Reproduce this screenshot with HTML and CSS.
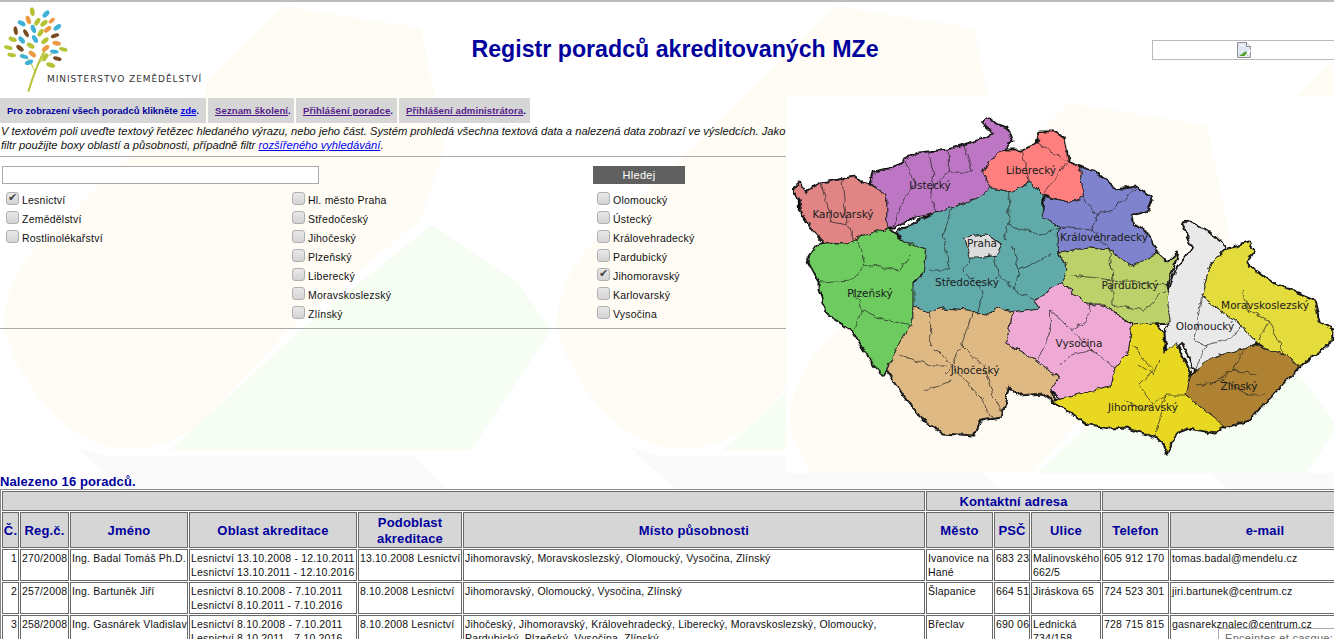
FILE: index.html
```html
<!DOCTYPE html>
<html lang="cs">
<head>
<meta charset="utf-8">
<title>Registr poradců akreditovaných MZe</title>
<link rel="stylesheet" href="styles.css">
</head>
<body>
<svg class="decor" viewBox="0 0 1334 639" aria-hidden="true">
  <defs>
    <g id="tileshapes">
      <path class="cream" d="M283 6 L421 28 L445 146 L420 220 L288 330 L202 422 Q165 450 127 449 Q70 447 30 385 Q4 345 4 320 Q6 285 33 250 Z"/>
      <path class="green" d="M432 225 L518 283 L551 330 L471 450 L170 450 L301 330 Z"/>
      <path class="greyish" d="M76 447 L109 456 L413 456 L446 488 L480 540 L150 540 L121 488 Z"/>
    </g>
    <pattern id="tile-page" width="553" height="700" patternUnits="userSpaceOnUse"><use href="#tileshapes"/></pattern>
    <pattern id="tile-map" width="553" height="700" patternUnits="userSpaceOnUse" patternTransform="translate(786 97)"><use href="#tileshapes"/></pattern>
  </defs>
  <rect width="1334" height="639" fill="url(#tile-page)"/>
</svg>
<header class="head">
  <div class="logo">
    <svg class="tree" viewBox="0 0 210 290" aria-hidden="true">
      <path d="M85 275 C100 225 115 185 135 150" fill="none" stroke="#b5c334" stroke-width="6"/>
      <path d="M112 195 C125 180 140 170 158 160 M104 215 C95 190 85 175 65 160" fill="none" stroke="#b5c334" stroke-width="3"/>
      <g class="lg"><ellipse cx="97" cy="35" rx="13" ry="7" transform="rotate(80 97 35)"/><ellipse cx="112" cy="65" rx="13" ry="7" transform="rotate(-60 112 65)"/><ellipse cx="132" cy="70" rx="13" ry="7" transform="rotate(-40 132 70)"/><ellipse cx="122" cy="98" rx="13" ry="7" transform="rotate(-60 122 98)"/><ellipse cx="38" cy="118" rx="13" ry="7" transform="rotate(20 38 118)"/><ellipse cx="135" cy="122" rx="13" ry="7" transform="rotate(-40 135 122)"/><ellipse cx="25" cy="143" rx="13" ry="6" transform="rotate(15 25 143)"/><ellipse cx="92" cy="137" rx="13" ry="7" transform="rotate(30 92 137)"/><ellipse cx="190" cy="148" rx="13" ry="6" transform="rotate(15 190 148)"/><ellipse cx="35" cy="165" rx="13" ry="6" transform="rotate(10 35 165)"/><ellipse cx="135" cy="172" rx="13" ry="7" transform="rotate(-60 135 172)"/><ellipse cx="152" cy="195" rx="14" ry="7" transform="rotate(20 152 195)"/></g>
      <g class="lb"><ellipse cx="138" cy="42" rx="13" ry="7" transform="rotate(-45 138 42)"/><ellipse cx="65" cy="70" rx="13" ry="7" transform="rotate(30 65 70)"/><ellipse cx="100" cy="87" rx="13" ry="7" transform="rotate(70 100 87)"/><ellipse cx="172" cy="82" rx="13" ry="7" transform="rotate(-35 172 82)"/><ellipse cx="105" cy="117" rx="13" ry="7" transform="rotate(60 105 117)"/><ellipse cx="65" cy="120" rx="13" ry="7" transform="rotate(50 65 120)"/><ellipse cx="163" cy="155" rx="13" ry="6" transform="rotate(5 163 155)"/><ellipse cx="72" cy="170" rx="13" ry="6" transform="rotate(15 72 170)"/><ellipse cx="87" cy="187" rx="13" ry="7" transform="rotate(-20 87 187)"/></g>
      <g class="lo"><ellipse cx="85" cy="60" rx="13" ry="7" transform="rotate(70 85 60)"/><ellipse cx="155" cy="62" rx="11" ry="6" transform="rotate(-40 155 62)"/><ellipse cx="143" cy="88" rx="13" ry="7" transform="rotate(-40 143 88)"/><ellipse cx="170" cy="130" rx="13" ry="7" transform="rotate(10 170 130)"/><ellipse cx="137" cy="145" rx="13" ry="7" transform="rotate(-40 137 145)"/><ellipse cx="97" cy="162" rx="13" ry="7" transform="rotate(40 97 162)"/></g>
      <g class="lk"><ellipse cx="47" cy="92" rx="13" ry="6" transform="rotate(80 47 92)"/><ellipse cx="78" cy="100" rx="13" ry="6" transform="rotate(60 78 100)"/><ellipse cx="165" cy="107" rx="13" ry="6" transform="rotate(-20 165 107)"/><ellipse cx="60" cy="145" rx="13" ry="7" transform="rotate(40 60 145)"/><ellipse cx="172" cy="176" rx="13" ry="6" transform="rotate(15 172 176)"/></g>
    </svg>
    <span class="logo-text">MINISTERSTVO ZEMĚDĚLSTVÍ</span>
  </div>
  <h1 class="title">Registr poradců akreditovaných MZe</h1>
  <div class="banner">
    <svg class="broken" viewBox="0 0 14 16" aria-hidden="true">
      <path d="M.5.5H9.5L13.5 4.5V15.5H.5Z" fill="#dfe6f6" stroke="#8f8f8f"/>
      <path d="M9.5.5V4.5H13.5" fill="#fff" stroke="#8f8f8f"/>
      <path d="M2 14 L9 9 L11 14Z" fill="#4fa52b"/>
      <path d="M3 4a2 1.5 0 0 1 4 0Z" fill="#fff"/>
      <path d="M13 7 L7 15 H9 L14 9Z" fill="#fff"/>
    </svg>
  </div>
</header>
<main class="main">
  <section class="filters">
    <nav class="tabs">
      <div class="tab tab-a">Pro zobrazení všech poradců klikněte <a href="#" class="lnk">zde</a>.</div>
      <div class="tab tab-b"><a href="#" class="vis">Seznam školení</a>.</div>
      <div class="tab tab-c"><a href="#" class="vis">Přihlášení poradce</a>.</div>
      <div class="tab tab-d"><a href="#" class="vis">Přihlášení administrátora</a>.</div>
    </nav>
    <p class="help">V textovém poli uveďte textový řetězec hledaného výrazu, nebo jeho část. Systém prohledá všechna textová data a nalezená data zobrazí ve výsledcích. Jako<br>filtr použijte boxy oblastí a působnosti, případně filtr <a href="#" class="lnk2">rozšířeného vyhledávání</a>.</p>
    <hr class="rule">
    <div class="search">
      <input class="query" type="text" aria-label="Hledat">
      <button class="go" type="button">Hledej</button>
    </div>
    <div class="checks">
      <div class="col col-1">
        <label class="chk"><input type="checkbox" checked>Lesnictví</label>
        <label class="chk"><input type="checkbox">Zemědělství</label>
        <label class="chk"><input type="checkbox">Rostlinolékařství</label>
      </div>
      <div class="col col-2">
        <label class="chk"><input type="checkbox">Hl. město Praha</label>
        <label class="chk"><input type="checkbox">Středočeský</label>
        <label class="chk"><input type="checkbox">Jihočeský</label>
        <label class="chk"><input type="checkbox">Plzeňský</label>
        <label class="chk"><input type="checkbox">Liberecký</label>
        <label class="chk"><input type="checkbox">Moravskoslezský</label>
        <label class="chk"><input type="checkbox">Zlínský</label>
      </div>
      <div class="col col-3">
        <label class="chk"><input type="checkbox">Olomoucký</label>
        <label class="chk"><input type="checkbox">Ústecký</label>
        <label class="chk"><input type="checkbox">Královehradecký</label>
        <label class="chk"><input type="checkbox">Pardubický</label>
        <label class="chk"><input type="checkbox" checked>Jihomoravský</label>
        <label class="chk"><input type="checkbox">Karlovarský</label>
        <label class="chk"><input type="checkbox">Vysočina</label>
      </div>
    </div>
    <hr class="rule rule-b">
  </section>
  <svg class="map" viewBox="786 97 548 376" role="img" aria-label="Mapa krajů">
    <defs>
      <filter id="rough" x="-5%" y="-5%" width="110%" height="110%">
        <feTurbulence type="fractalNoise" baseFrequency="0.13" numOctaves="2" seed="4"/>
        <feDisplacementMap in="SourceGraphic" scale="6" xChannelSelector="R" yChannelSelector="G"/>
      </filter>
      <g id="regions">
        <polygon fill="#e08484" points="793,188 800,183 805,192 820,183 837,180 852,177 867,185 883,195 883,228 857,237 845,243 823,242 810,227 800,210 800,200"/>
        <polygon fill="#bd76c4" points="867,183 870,172 890,168 900,160 912,153 923,152 942,150 957,145 973,140 987,133 982,130 975,123 980,118 990,125 998,128 1003,142 993,150 980,162 975,172 983,188 970,198 947,207 930,213 907,218 890,228 883,228 883,195"/>
        <polygon fill="#ff7f7f" points="975,172 980,162 993,150 1012,150 1027,143 1030,132 1043,132 1053,138 1057,162 1068,167 1072,198 1057,202 1033,195 1020,182 1003,192 983,188"/>
        <polygon fill="#7f82cc" points="1068,167 1083,173 1103,190 1123,187 1137,198 1133,210 1118,215 1120,225 1133,233 1142,253 1117,267 1097,250 1077,248 1048,252 1047,242 1048,227 1032,215 1035,197 1057,202 1072,198"/>
        <polygon fill="#60abaa" points="893,232 930,213 947,207 970,198 983,188 1003,192 1020,182 1033,195 1032,215 1048,227 1047,252 1057,270 1050,283 1025,300 1030,308 1003,312 990,308 977,315 960,310 937,308 923,312 908,307 907,287 918,273 920,250 900,242"/>
        <polygon fill="#6dcb60" points="807,260 818,243 845,243 857,237 883,228 900,242 920,250 918,273 908,283 908,320 890,353 880,375 872,367 850,330 827,315 818,290 818,282"/>
        <polygon fill="#dfb984" points="908,307 923,312 937,308 960,310 977,315 990,308 1003,312 998,343 1030,363 1048,377 1040,390 1045,402 1033,393 1010,395 1000,385 993,417 973,420 967,435 937,433 917,420 913,413 897,393 883,370 890,353 908,320"/>
        <polygon fill="#eeaad4" points="1025,300 1050,283 1077,305 1090,305 1118,325 1115,352 1102,368 1098,387 1077,392 1050,398 1040,390 1048,377 1030,363 998,343 1003,312 1030,308"/>
        <polygon fill="#bdd16b" points="1048,252 1077,248 1097,250 1117,267 1142,253 1152,263 1162,253 1152,287 1155,297 1155,323 1120,325 1090,305 1077,305 1050,283 1057,270"/>
        <polygon fill="#e9e9e9" points="1167,223 1173,222 1190,230 1208,247 1193,265 1185,297 1213,317 1223,325 1238,343 1228,348 1193,358 1187,368 1178,370 1167,343 1152,353 1150,333 1155,323 1152,297 1162,267 1177,247"/>
        <polygon fill="#e4dc3e" points="1193,265 1208,250 1230,243 1235,250 1227,263 1253,283 1270,290 1293,300 1298,323 1312,330 1312,340 1278,367 1267,355 1247,348 1238,343 1223,325 1213,317 1185,297"/>
        <polygon fill="#e9d822" points="1043,402 1050,398 1077,392 1098,387 1102,368 1115,352 1118,325 1140,323 1148,333 1150,353 1160,343 1173,370 1175,377 1170,395 1190,412 1208,425 1198,433 1173,428 1160,433 1152,453 1148,443 1143,438 1113,427 1097,428 1077,425 1057,410"/>
        <polygon fill="#ae8232" points="1175,375 1193,358 1228,348 1237,345 1267,355 1278,367 1252,397 1240,410 1230,420 1208,427 1190,412 1170,395"/>
      </g>
    </defs>
    <rect class="map-bg" x="786" y="97" width="548" height="376"/>
    <rect x="786" y="97" width="548" height="376" fill="url(#tile-map)"/>
    <g filter="url(#rough)" transform="translate(790 0) scale(1.0417 1) translate(-790 0)">
      <use href="#regions" class="rg-outer"/>
      <use href="#regions" class="rg-inner"/>
      <polygon class="praha" points="958,237 980,235 993,245 988,255 972,258 963,258 960,248"/>
      <g class="districts">
        <polyline points="820,183 825,205 830,222 845,225 852,243"/>
        <polyline points="840,180 842,200 845,225"/>
        <polyline points="900,160 910,185 895,205 890,228"/>
        <polyline points="923,152 928,175 925,195 930,213"/>
        <polyline points="942,150 942,172 965,172 957,145"/>
        <polyline points="942,172 925,190"/>
        <polyline points="1012,150 1020,182"/>
        <polyline points="1027,143 1057,162 1040,185 1033,195"/>
        <polyline points="1072,198 1085,215 1100,210 1123,187"/>
        <polyline points="1085,215 1080,230 1048,227"/>
        <polyline points="1080,230 1097,250"/>
        <polyline points="1000,190 1000,225 995,240"/>
        <polyline points="947,207 937,235 943,270 925,270"/>
        <polyline points="1000,225 1030,235 1048,227"/>
        <polyline points="1003,245 1010,270 1040,255"/>
        <polyline points="965,258 955,270 975,290 970,315"/>
        <polyline points="1010,270 1005,290 1025,300"/>
        <polyline points="985,255 990,275 1005,290"/>
        <polyline points="855,240 862,265 850,280 818,282"/>
        <polyline points="862,265 895,270 905,255"/>
        <polyline points="850,290 860,310 880,320 908,325"/>
        <polyline points="860,310 850,330"/>
        <polyline points="925,313 925,345 945,365 940,375"/>
        <polyline points="965,312 955,345 945,365 975,400 985,420"/>
        <polyline points="955,345 975,365 985,395 995,415"/>
        <polyline points="895,355 925,365 940,365"/>
        <polyline points="920,390 935,385 945,380"/>
        <polyline points="1040,310 1040,330 1028,360"/>
        <polyline points="1040,310 1060,330 1075,320 1078,305"/>
        <polyline points="1060,330 1080,350 1102,368"/>
        <polyline points="1080,350 1060,355 1050,365"/>
        <polyline points="1097,250 1100,280 1100,305"/>
        <polyline points="1060,275 1100,280 1155,285"/>
        <polyline points="1100,305 1130,310 1150,290"/>
        <polyline points="1185,297 1178,340 1190,345 1178,370"/>
        <polyline points="1190,345 1210,340 1225,325"/>
        <polyline points="1120,345 1130,360 1140,370 1125,385 1140,405"/>
        <polyline points="1125,365 1140,375 1145,360"/>
        <polyline points="1110,400 1130,410 1150,395 1170,395"/>
        <polyline points="1150,395 1145,420 1140,435"/>
        <polyline points="1225,290 1230,310 1250,320 1265,355"/>
        <polyline points="1250,320 1240,340"/>
        <polyline points="1193,385 1215,370 1225,350"/>
        <polyline points="1180,385 1205,380 1230,395 1245,395"/>
        <polyline points="1205,380 1215,370 1240,375"/>
      </g>
    </g>
    <g class="maplabels">
      <text x="843" y="218">Karlovarský</text>
      <text x="930" y="189">Ústecký</text>
      <text x="1031" y="174">Liberecký</text>
      <text x="1104" y="241">Královéhradecký</text>
      <text x="982" y="247">Praha</text>
      <text x="967" y="286">Středočeský</text>
      <text x="870" y="297">Plzeňský</text>
      <text x="1130" y="289">Pardubický</text>
      <text x="1265" y="309">Moravskoslezský</text>
      <text x="1205" y="330">Olomoucký</text>
      <text x="1079" y="347">Vysočina</text>
      <text x="975" y="374">Jihočeský</text>
      <text x="1239" y="390">Zlínský</text>
      <text x="1143" y="411">Jihomoravský</text>
    </g>
  </svg>
</main>
<p class="found">Nalezeno 16 poradců.</p>
<table class="list">
  <colgroup>
    <col class="c1"><col class="c2"><col class="c3"><col class="c4"><col class="c5"><col class="c6"><col class="c7"><col class="c8"><col class="c9"><col class="c10"><col class="c11">
  </colgroup>
  <thead>
    <tr class="r-top"><th colspan="6"></th><th colspan="3">Kontaktní adresa</th><th colspan="2"></th></tr>
    <tr class="r-head"><th>Č.</th><th>Reg.č.</th><th>Jméno</th><th>Oblast akreditace</th><th>Podoblast akreditace</th><th>Místo působnosti</th><th>Město</th><th>PSČ</th><th>Ulice</th><th>Telefon</th><th>e-mail</th></tr>
  </thead>
  <tbody>
    <tr><td class="num">1</td><td class="nw">270/2008</td><td class="nw">Ing. Badal Tomáš Ph.D.</td><td class="nw">Lesnictví 13.10.2008 - 12.10.2011<br>Lesnictví 13.10.2011 - 12.10.2016</td><td class="nw">13.10.2008 Lesnictví</td><td>Jihomoravský, Moravskoslezský, Olomoucký, Vysočina, Zlínský</td><td>Ivanovice na Hané</td><td class="nw">683 23</td><td>Malinovského 662/5</td><td class="nw">605 912 170</td><td>tomas.badal@mendelu.cz</td></tr>
    <tr><td class="num">2</td><td class="nw">257/2008</td><td class="nw">Ing. Bartuněk Jiří</td><td class="nw">Lesnictví 8.10.2008 - 7.10.2011<br>Lesnictví 8.10.2011 - 7.10.2016</td><td class="nw">8.10.2008 Lesnictví</td><td>Jihomoravský, Olomoucký, Vysočina, Zlínský</td><td>Šlapanice</td><td class="nw">664 51</td><td>Jiráskova 65</td><td class="nw">724 523 301</td><td>jiri.bartunek@centrum.cz</td></tr>
    <tr><td class="num">3</td><td class="nw">258/2008</td><td class="nw">Ing. Gasnárek Vladislav</td><td class="nw">Lesnictví 8.10.2008 - 7.10.2011<br>Lesnictví 8.10.2011 - 7.10.2016</td><td class="nw">8.10.2008 Lesnictví</td><td>Jihočeský, Jihomoravský, Královehradecký, Liberecký, Moravskoslezský, Olomoucký, Pardubický, Plzeňský, Vysočina, Zlínský</td><td>Břeclav</td><td class="nw">690 06</td><td>Lednická 734/158</td><td class="nw">728 715 815</td><td>gasnarekznalec@centrum.cz</td></tr>
  </tbody>
</table>
<div class="tip">Enceintes et casque:</div>
</body>
</html>
```
FILE: styles.css
```css
html, body { height: 639px; overflow: hidden; }
body {
  margin: 0;
  position: relative;
  background: #fff;
  font-family: "Liberation Sans", Arial, sans-serif;
  font-size: 11px;
  color: #111;
  border-top: 2px solid #bcbcbc;
  box-sizing: border-box;
}
.decor { position: absolute; left: 0; top: -2px; width: 1334px; height: 639px; z-index: -1; }
.cream { fill: #fffcf5; }
.green { fill: #f6fdf3; }
.greyish { fill: #fafafa; }

.head { display: flex; height: 95px; position: relative; }
.logo { width: 206px; position: relative; flex: none; background: #fff; }
.tree { position: absolute; left: 0; top: -2px; width: 70px; height: 96.67px; }
.lb ellipse { fill: #3fb0d8; }
.lg ellipse { fill: #b5c334; }
.lo ellipse { fill: #ee9a44; }
.lk ellipse { fill: #7a4a20; }
.logo-text {
  position: absolute; left: 47px; top: 72px;
  font-family: "DejaVu Sans", sans-serif; font-size: 9px; letter-spacing: .92px;
  white-space: nowrap; color: #333;
}
.title {
  flex: 1; margin: 0 190px 0 0; padding: 33px 0 0; text-align: center;
  font-size: 23.2px; line-height: 28px; font-weight: bold; color: #00009c;
}
.banner {
  position: absolute; left: 1152px; top: 38px; width: 190px; height: 18px;
  border: 1px solid #bbb; display: flex; justify-content: center; background: #fff;
}
.broken { width: 14px; height: 16px; margin: 1px 0 0 -8px; }

.main { display: flex; height: 376px; }
.filters { width: 786px; flex: none; overflow: hidden; position: relative; }
.map { width: 548px; height: 376px; flex: none; }
.map-bg { fill: #fff; }

.tabs { display: flex; gap: 2px; height: 25px; margin-top: 1px; }
.tab {
  background: #d6d6d6; display: flex; align-items: center; white-space: pre;
  padding-left: 7px; font-weight: bold; font-size: 9.5px; color: #00009c; letter-spacing: .13px;
}
.tab-a { width: 199px; letter-spacing: .02px; }
.tab-b { width: 79px; }
.tab-c { width: 94px; }
.tab-d { width: 124px; }
.lnk { color: #0000ee; }
.vis { color: #551a8b; }
.lnk2 { color: #0000ee; }

.help {
  margin: 1px 0 0 1px; font-style: italic; font-size: 11.2px; line-height: 14px;
  white-space: nowrap; color: #111;
}
.rule { border: 0; border-top: 1px solid #aaa; height: 0; margin: 4px 0 0; }
.search { position: relative; height: 18px; margin-top: 9px; }
.query {
  position: absolute; left: 2px; top: 0; width: 317px; height: 18px; box-sizing: border-box;
  border: 1px solid #aaa; background: #fff; padding: 0; margin: 0; border-radius: 0;
}
.go {
  position: absolute; left: 593px; top: 0; width: 92px; height: 18px; padding: 0;
  border: 0; background: #606060; color: #fff; font: 11px "Liberation Sans", Arial, sans-serif; letter-spacing: .3px;
}
.checks { display: flex; margin-top: 6px; height: 133px; }
.col { display: flex; flex-direction: column; }
.col-1 { width: 292px; padding-left: 6px; box-sizing: border-box; }
.col-2 { width: 305px; }
.col-3 { flex: 1; }
.chk { display: flex; align-items: center; height: 19px; font-size: 10.5px; letter-spacing: .22px; white-space: nowrap; }
.chk input {
  appearance: none; width: 13px; height: 13px; margin: -3px 3px 0 0; box-sizing: border-box; position: relative;
  border: 1px solid #b0b0b0; border-radius: 3px; background: linear-gradient(#e8e8e8, #d4d4d4); flex: none;
}
.chk input:checked::after {
  content: "✔"; position: absolute; left: 1px; top: -2px; font: 11px/13px "DejaVu Sans", sans-serif; color: #444;
}
.rule-b { margin-top: 5px; }

.found { margin: 2px 0 0; font-size: 13px; line-height: 14px; font-weight: bold; color: #00009c; letter-spacing: .1px; }
.list {
  width: 1362px; table-layout: fixed; border-collapse: separate; border-spacing: 1px;
  border: 1px solid #888; margin-top: 0; background: #fff; font-size: 10.5px; letter-spacing: .17px;
}
.list th, .list td { border: 1px solid #6a6a6a; padding: 0; }
.list th { background: #d6d6d6; color: #00009c; font-size: 13px; line-height: 16px; font-weight: bold; padding-top: 1px; }
.list td { vertical-align: top; line-height: 14px; height: 29px; padding: 1px 0 0 1px; background: #fff; }
.list td.num { text-align: right; padding-right: 1px; }
.list td.nw { white-space: nowrap; }
.r-top th { height: 17px; }
.r-head th { height: 33px; }
.c1 { width: 17px; } .c2 { width: 49px; } .c3 { width: 118px; } .c4 { width: 168px; }
.c5 { width: 104px; } .c6 { width: 462px; } .c7 { width: 67px; } .c8 { width: 36px; }
.c9 { width: 70px; } .c10 { width: 67px; } .c11 { width: 190px; }

.rg-outer { stroke: #111; stroke-width: 3; stroke-linejoin: round; }
.rg-inner { stroke: #222; stroke-width: .9; stroke-linejoin: round; }
.praha { fill: #dcdcdc; stroke: #222; stroke-width: 1; }
.districts polyline { fill: none; stroke: #222; stroke-width: .7; }
.maplabels text { font-family: "DejaVu Sans", sans-serif; font-size: 10.5px; text-anchor: middle; fill: #1a1a1a; }

.tip {
  position: absolute; left: 1218px; top: 626px; width: 116px; height: 20px; box-sizing: border-box;
  border: 1px solid #aaa; border-right: 0; background: #fff; padding: 3px 0 0 6px; font-size: 11px; letter-spacing: .3px; color: #666; white-space: nowrap; overflow: hidden;
}
```
